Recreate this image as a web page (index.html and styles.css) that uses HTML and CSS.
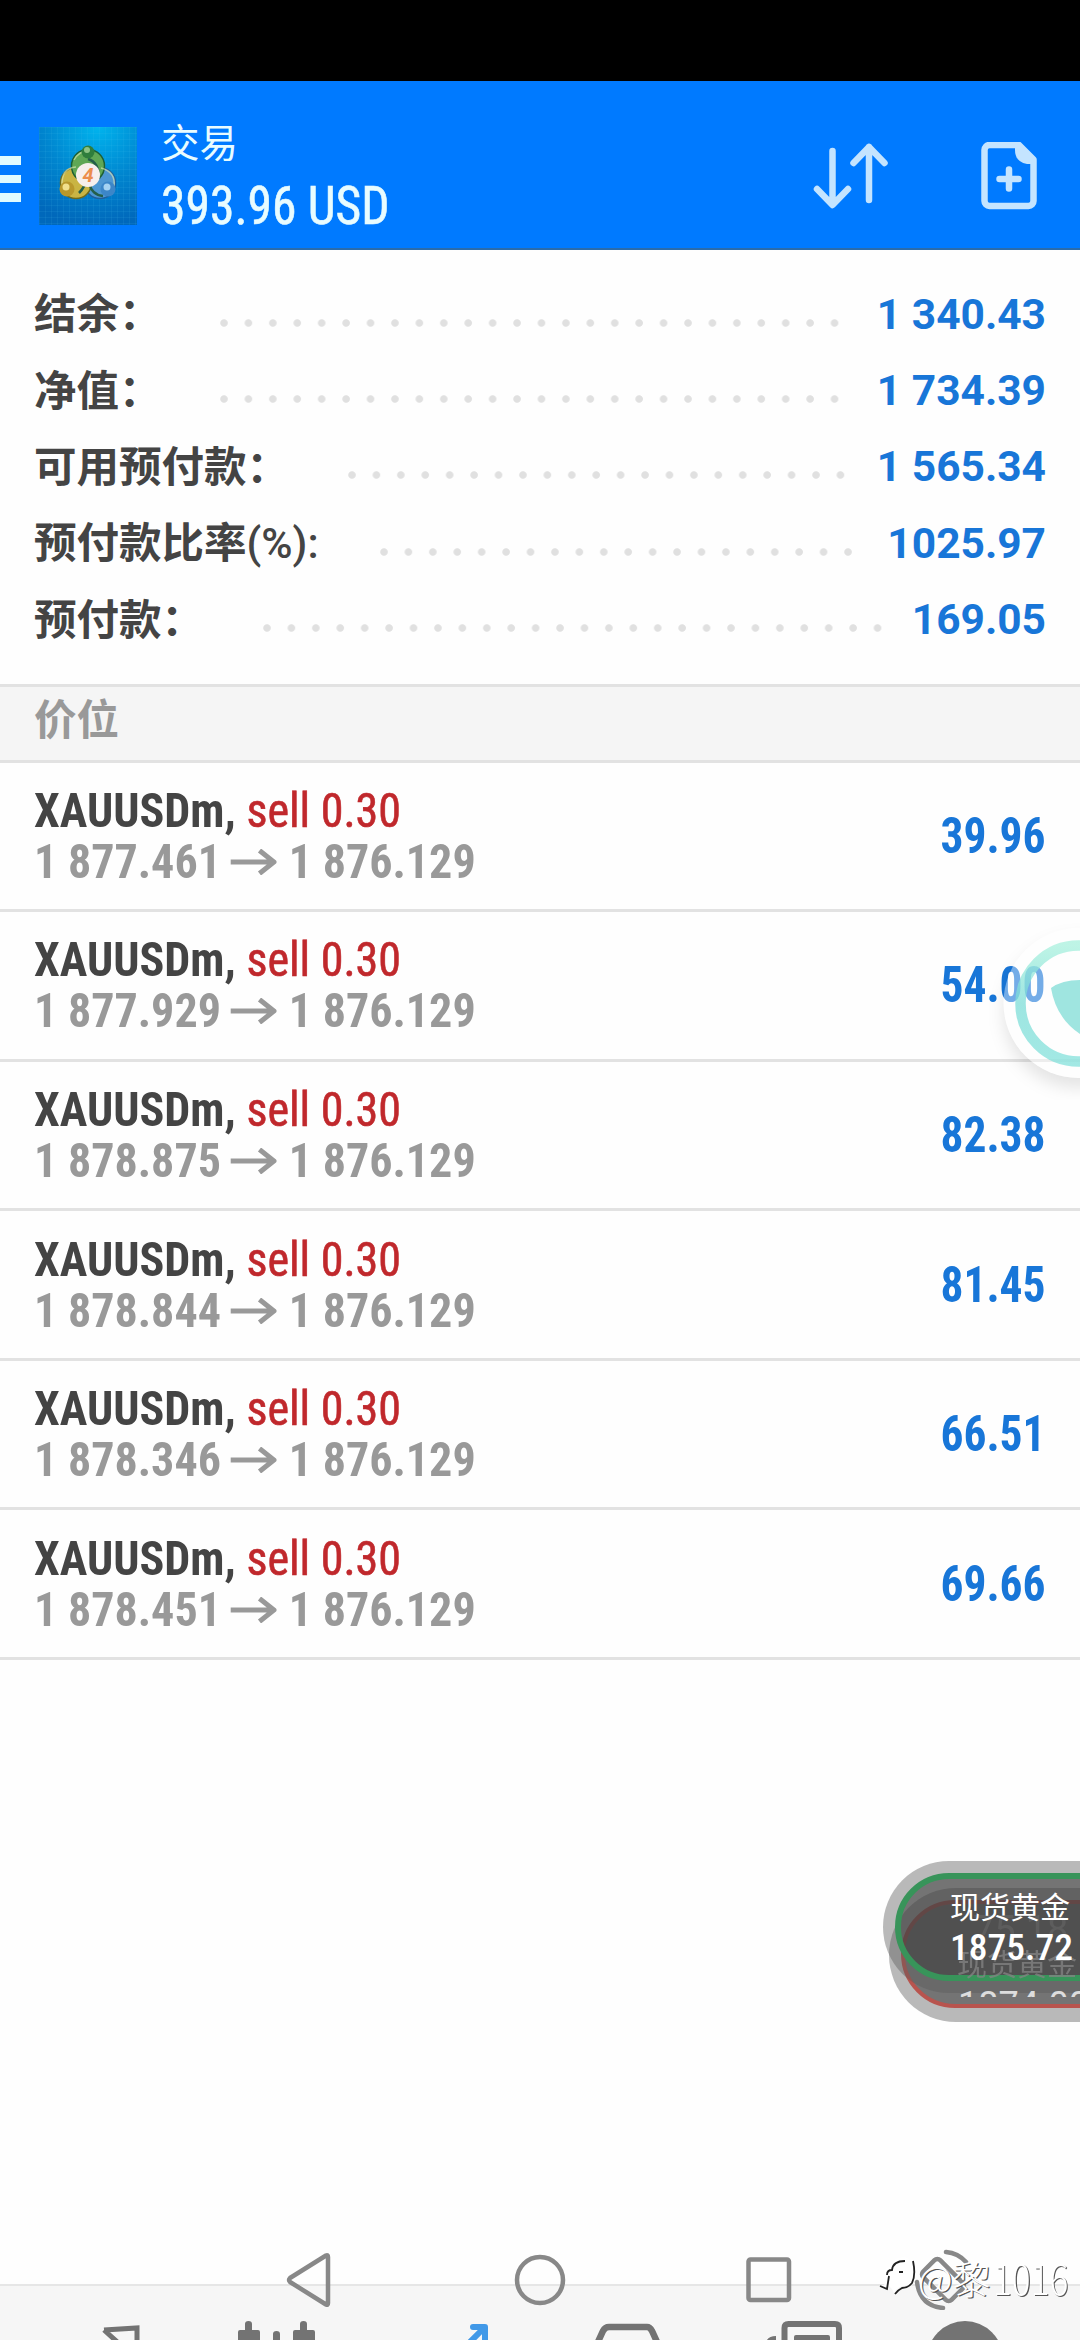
FILE: index.html
```html
<!DOCTYPE html>
<html lang="zh-CN">
<head>
<meta charset="utf-8">
<title>交易</title>
<link rel="stylesheet" href="styles.css">
</head>
<body>
<div class="screen">
  <div class="cutout"></div>
  <header class="topbar">
    <div class="menu"><i></i><i></i><i></i></div>
    <svg class="logo" viewBox="0 0 98 98">
      <defs>
        <radialGradient id="sky" cx=".6" cy="0" r="1"><stop offset="0" stop-color="#00b4ee"/><stop offset=".55" stop-color="#0085cf"/><stop offset="1" stop-color="#0068bb"/></radialGradient>
        <pattern id="grid" width="6" height="6" patternUnits="userSpaceOnUse"><path d="M0 .5H6M.5 0V6" stroke="#4cc4ee" stroke-opacity=".1" fill="none"/></pattern>
      </defs>
      <rect width="98" height="98" fill="url(#sky)"/>
      <rect width="98" height="98" fill="url(#grid)"/>
      <g stroke-width="1.500">
        <circle cx="61" cy="56" r="15.500" fill="#4e97d2" stroke="#1f5f9c"/>
        <circle cx="37" cy="56" r="15.500" fill="#c9b443" stroke="#6d6a1c"/>
        <circle cx="49" cy="39" r="16.500" fill="#5fa755" stroke="#1d5f33"/>
        <path d="M23 59Q22 41 37 40M75 59Q77 45 62 41M35 33Q40 24 49 24" fill="none" stroke="#e4efb8" stroke-opacity=".6"/>
        <path d="M49 32Q60 35 60 52M40 66Q46 60 47 53M50 56Q53 68 64 69" fill="none" stroke="#245f4a" stroke-width="2.500"/>
      </g>
      <circle cx="49" cy="25" r="6.500" fill="#2f7d3c"/><circle cx="48" cy="23" r="3" fill="#8cc284"/>
      <circle cx="28" cy="62" r="7.500" fill="#b8982c"/><circle cx="27" cy="60" r="3.500" fill="#f1e08c"/>
      <circle cx="69" cy="62" r="7.500" fill="#3c86c8"/><circle cx="68" cy="60" r="3.500" fill="#a5d2f2"/>
      <circle cx="49" cy="48" r="12" fill="#f7efec"/>
      <text x="49" y="55" text-anchor="middle" class="logo-num">4</text>
    </svg>
    <div class="heading">
      <div class="title">交易</div>
      <div class="total cond">393.96 USD</div>
    </div>
    <svg class="act sort" viewBox="0 0 76 66"><path d="M19.500 8V61M4 46l15.500 16L35 46M56 57V4M40.500 20L56 4L71.500 20"/></svg>
    <svg class="act add" viewBox="0 0 56 68"><path d="M8.500 3H38L52.500 17.500V59a5 5 0 0 1-5 5H8.500a5 5 0 0 1-5-5V8a5 5 0 0 1 5-5z"/><path class="fold" d="M34 3H40L53 17V22H46Q34 20 34 8z"/><path d="M28 27.500V46.500M18.500 37H37.500"/></svg>
  </header>

  <section class="summary">
    <div class="line"><b>结余：</b><i class="dots d1"></i><span>1 340.43</span></div>
    <div class="line"><b>净值：</b><i class="dots d1"></i><span>1 734.39</span></div>
    <div class="line"><b>可用预付款：</b><i class="dots d3"></i><span>1 565.34</span></div>
    <div class="line"><b>预付款比率<em>(%):</em></b><i class="dots d4"></i><span>1025.97</span></div>
    <div class="line"><b>预付款：</b><i class="dots d5"></i><span>169.05</span></div>
  </section>
  <div class="band">价位</div>

  <main class="positions">
    <div class="pos"><div class="info cond"><p class="sym">XAUUSDm, <span>sell 0.30</span></p><p class="px"><span>1 877.461</span><svg viewBox="0 0 46 26" preserveAspectRatio="none"><path d="M0 13H43M29 1.500L43.500 13L29 24.500"/></svg>1 876.129</p></div><div class="profit cond">39.96</div></div>
    <div class="pos"><div class="info cond"><p class="sym">XAUUSDm, <span>sell 0.30</span></p><p class="px"><span>1 877.929</span><svg viewBox="0 0 46 26" preserveAspectRatio="none"><path d="M0 13H43M29 1.500L43.500 13L29 24.500"/></svg>1 876.129</p></div><div class="profit cond">54.00</div></div>
    <div class="pos"><div class="info cond"><p class="sym">XAUUSDm, <span>sell 0.30</span></p><p class="px"><span>1 878.875</span><svg viewBox="0 0 46 26" preserveAspectRatio="none"><path d="M0 13H43M29 1.500L43.500 13L29 24.500"/></svg>1 876.129</p></div><div class="profit cond">82.38</div></div>
    <div class="pos"><div class="info cond"><p class="sym">XAUUSDm, <span>sell 0.30</span></p><p class="px"><span>1 878.844</span><svg viewBox="0 0 46 26" preserveAspectRatio="none"><path d="M0 13H43M29 1.500L43.500 13L29 24.500"/></svg>1 876.129</p></div><div class="profit cond">81.45</div></div>
    <div class="pos"><div class="info cond"><p class="sym">XAUUSDm, <span>sell 0.30</span></p><p class="px"><span>1 878.346</span><svg viewBox="0 0 46 26" preserveAspectRatio="none"><path d="M0 13H43M29 1.500L43.500 13L29 24.500"/></svg>1 876.129</p></div><div class="profit cond">66.51</div></div>
    <div class="pos"><div class="info cond"><p class="sym">XAUUSDm, <span>sell 0.30</span></p><p class="px"><span>1 878.451</span><svg viewBox="0 0 46 26" preserveAspectRatio="none"><path d="M0 13H43M29 1.500L43.500 13L29 24.500"/></svg>1 876.129</p></div><div class="profit cond">69.66</div></div>
  </main>

  <footer class="tabs">
    <svg viewBox="0 0 1080 54" fill="none" stroke="#737373">
      <path d="M104 44L137 42V60M104 44L124 62" stroke-width="5"/>
      <path d="M238 54V46q0-2 2-2H245V38q0-3 3.500-3t3.500 3V44H258q2 0 2 2V54zM273 54V48q0-3 3.500-3t3.500 3V54zM293 54V46q0-2 2-2H300V38q0-3 3.500-3t3.500 3V44H313q2 0 2 2V54z" fill="#737373" stroke="none"/>
      <path d="M473 41H485V60M484 42L466 60" stroke="#4199e8" stroke-width="6" stroke-linecap="round" stroke-linejoin="round"/>
      <path d="M597 58L603 45Q605 41 609 41H647Q650 41 652 45L658 58" stroke-width="6.500"/>
      <path d="M784.500 60V42q0-4 4-4H835q4 0 4 4V60" stroke-width="6"/>
      <path d="M794 60V51q0-2 2-2H828q2 0 2 2V60zM766 56Q768 50 776 50V60z" fill="#737373" stroke="none"/>
      <circle cx="965" cy="73" r="38" fill="#737373" stroke="none"/>
    </svg>
  </footer>

  <svg class="sysnav" viewBox="0 0 1080 70">
    <path d="M326 20.500Q328 19.500 328 22V68Q328 70.500 326 69.500L290 47Q288 45 290 43z" transform="translate(0 -5)"/>
    <circle cx="540" cy="40" r="23"/>
    <rect x="748.500" y="19.500" width="40.500" height="40.500" rx="2"/>
    <path d="M946 12Q958 13 966 22M917 42Q920 66 943 68"/>
    <rect x="931" y="20" width="24" height="40" rx="4" transform="rotate(-45 943 40)"/>
  </svg>

  <svg class="assist" viewBox="0 0 100 180">
    <defs><linearGradient id="mint" x1="0" y1="0" x2="0" y2="1"><stop offset="0" stop-color="#a5f0dc"/><stop offset=".5" stop-color="#78dcd6"/><stop offset="1" stop-color="#7fe0da"/></linearGradient>
    <filter id="soft" x="-30%" y="-30%" width="160%" height="160%"><feGaussianBlur stdDeviation="8"/></filter>
    <mask id="outside"><rect width="100" height="180" fill="#fff"/><circle cx="98.500" cy="83" r="75" fill="#000"/></mask></defs>
    <g mask="url(#outside)"><circle class="shade" cx="98.500" cy="93" r="75" filter="url(#soft)"/></g>
    <circle cx="98.500" cy="83" r="75" fill="#fff" fill-opacity=".4"/>
    <circle cx="98.500" cy="83.500" r="58" fill="none" stroke="url(#mint)" stroke-opacity=".72" stroke-width="10.500"/>
    <path d="M71 68Q82 60 100 60V114Q76 98 71 68z" fill="#9fe5e0"/>
  </svg>

  <div class="quote">
    <div class="pill back"><div class="ring red"></div></div>
    <div class="pill front"><div class="ring green"></div></div>
    <div class="ghost g1">75.18</div>
    <div class="ghost g2">现货黄金</div>
    <div class="ghost g3">1874.00</div>
    <div class="name">现货黄金</div>
    <div class="rate">1875.72</div>
  </div>

  <div class="mark">
    <svg viewBox="0 0 40 44"><path d="M1 31Q10 31 11 19H5Q7 12 13 12Q15 2 26 2Q35 3 35 17Q35 31 26 31Q20 31 16 38Q14 33 11 31Q6 36 1 31z" class="wh"/><path class="sh" d="M2 31L9 34L11 21M9 20Q9 15 14 15Q15 6 27 6M21 17H25M35 6Q38 20 34 28Q30 33 24 33Q20 35 17 39"/></svg>
    <span class="at">@黎</span><span class="digits">1016</span>
  </div>
</div>
</body>
</html>
```
FILE: styles.css
```css
* { box-sizing: border-box; }
body { margin: 0; background: #fff; font-family: Roboto, "Noto Sans CJK SC", sans-serif; }
p { margin: 0; }
.screen { position: relative; display: flex; flex-direction: column; width: 1080px; height: 2340px; overflow: hidden; background: #fefefe; }
.cond { font-family: "Roboto Condensed", Roboto, "Noto Sans CJK SC", sans-serif; font-stretch: 75%; }

.cutout { flex: none; height: 81px; background: #000; }
.topbar { flex: none; display: flex; align-items: flex-start; height: 169px; background: #007aff; border-bottom: 2px solid #2b6cab; color: #e8fcff; }
.menu { display: flex; flex-direction: column; gap: 10px; width: 39px; padding-top: 75px; }
.menu i { width: 21px; height: 8.500px; background: #e0fbff; }
.logo { width: 98px; height: 98px; margin-top: 46px; }
.logo-num { font: italic 700 20px Roboto, sans-serif; fill: #ec8d4c; }
.heading { width: 300px; margin-left: 24px; padding-top: 37px; }
.title { height: 52px; font-size: 38.500px; line-height: 52px; }
.total { height: 70px; font-size: 53px; line-height: 72px; white-space: nowrap; transform: scaleX(.935); transform-origin: left; -webkit-text-stroke: .6px; }
.act { fill: none; stroke: #c4e4ff; stroke-width: 6.500; stroke-linecap: round; stroke-linejoin: round; }
.sort { width: 76px; height: 66px; margin: 62px 0 0 352px; }
.add { width: 56px; height: 68px; margin: 61px 0 0 92px; }
.add .fold { fill: #c4e4ff; stroke: none; }

.summary { flex: none; height: 434px; padding: 26px 34px 0; }
.line { display: flex; align-items: center; height: 76.400px; color: #444; }
.line b { flex: 1; margin-top: -7px; font-size: 42.500px; white-space: nowrap; }
.line em { font-style: normal; font-weight: 500; }
.line span { font-size: 42.500px; font-weight: 700; color: #1876d8; text-align: right; }
.dots { flex: none; height: 8px; margin-top: 17px; background: radial-gradient(circle at 4px 4px, #e0e0e0 3.300px, transparent 4.200px) 0 0 / 24.430px 8px repeat-x; }
.d1 { width: 620px; margin-right: 37px; }
.d3 { width: 497px; margin-right: 32px; }
.d4 { width: 472px; margin-right: 35px; }
.d5 { width: 619px; margin-right: 30px; }

.band { flex: none; height: 78.500px; padding-left: 34px; border-top: 3px solid #e2e2e2; border-bottom: 3px solid #e2e2e2; background: #f5f5f5; color: #999; font-size: 42.500px; font-weight: 700; line-height: 68px; }
.positions { flex: 1; }
.pos { display: flex; justify-content: space-between; align-items: center; height: 149.600px; padding: 0 34px; border-bottom: 3px solid #e2e2e2; }
.info { transform: scaleX(.94); transform-origin: left; }
.sym, .px { height: 52px; font-size: 49px; line-height: 54px; font-weight: 700; white-space: nowrap; }
.sym { color: #444; }
.sym span { color: #c0282c; font-weight: 400; -webkit-text-stroke: .6px; }
.px { display: flex; align-items: center; color: #999; }
.px span { width: 209px; }
.px svg { width: 49px; height: 26px; margin-right: 13px; fill: none; stroke: #999; stroke-width: 5; }
.profit { color: #1876d8; font-size: 50px; font-weight: 700; transform: scaleX(.91); transform-origin: right; }

.tabs { flex: none; height: 56px; border-top: 2px solid #e6e6e6; background: #f6f6f6; }
.tabs svg { display: block; width: 1080px; height: 54px; }
.sysnav { position: absolute; left: 0; top: 2240px; width: 1080px; height: 70px; fill: none; stroke: #888; stroke-width: 4.500; stroke-linecap: round; stroke-linejoin: round; }

.assist { position: absolute; left: 980px; top: 920px; width: 100px; height: 180px; }
.assist .shade { fill: #000; fill-opacity: .1; }

.quote { position: absolute; right: 0; top: 1855px; width: 205px; height: 175px; overflow: hidden; color: #fff; }
.quote > * { position: absolute; }
.pill { width: 300px; border-radius: 70px; background: rgba(90,90,90,.42); }
.front { left: 8px; top: 6px; height: 132px; }
.back { left: 14px; top: 33px; height: 134px; }
.ring { margin: 12px; height: 108px; border-radius: 54px; background: rgba(60,60,60,.55); }
.green { border: 6px solid #38945a; }
.red { border: 4px solid #b8544e; }
.ghost { color: #858585; white-space: nowrap; overflow: hidden; }
.g1 { left: 98px; top: 56px; font-size: 38px; line-height: 38px; height: 24px; opacity: .25; }
.g2 { left: 82px; top: 92px; font-size: 30px; line-height: 36px; opacity: .75; }
.g3 { left: 83px; top: 131px; height: 11px; font-size: 36px; line-height: 38px; color: #ddd; font-stretch: 88%; }
.name { left: 75px; top: 35px; font-size: 30px; line-height: 36px; white-space: nowrap; }
.rate { left: 75px; top: 70px; font-size: 37.500px; line-height: 44px; font-weight: 500; font-stretch: 86%; }

.mark { position: absolute; left: 878px; top: 2254px; display: flex; align-items: center; height: 46px; color: #fff; font-family: "Noto Sans CJK SC", sans-serif; font-weight: 300; text-shadow: 1.200px 1.200px 0 #555; }
.mark svg { width: 40px; height: 44px; fill: none; }
.mark .wh { fill: #fff; }
.mark .sh { stroke: #222; stroke-width: 1.800; }
.mark .at { width: 75px; font-size: 38px; white-space: nowrap; }
.mark .digits { font-size: 41px; transform: scaleX(.86); transform-origin: left; }
```
